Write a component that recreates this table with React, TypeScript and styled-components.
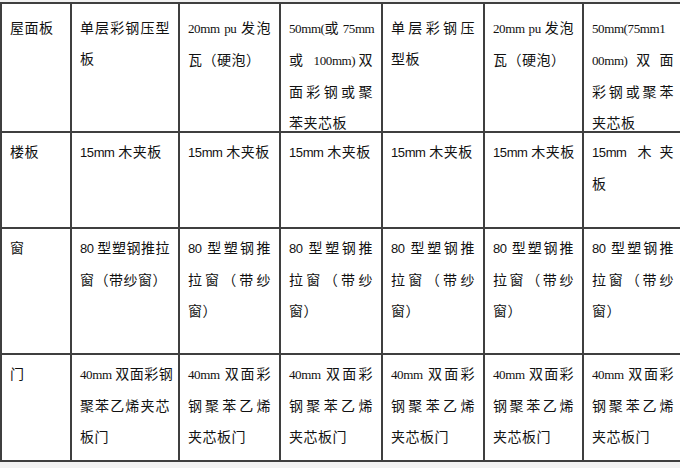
import { FunctionComponent } from "react";
import styled, { createGlobalStyle } from "styled-components";

const GlobalStyle = createGlobalStyle`
  html, body {
    margin: 0;
    padding: 0;
    background: #f2f2f2;
  }
  body {
    font-family: "Noto Sans CJK SC", sans-serif;
    color: #111;
  }
`;

const Page = styled.div`
  width: 680px;
  height: 468px;
  padding-top: 2px;
  box-sizing: border-box;
  overflow: hidden;
`;

const Frame = styled.div`
  height: 460px;
  width: 684px;
  display: grid;
  grid-template-columns: 70px 108px 101px 102px 102px 99px 100px;
  grid-template-rows: 129px 96px 126px 1fr;
  border-top: 2px solid #3f3f3f;
  border-left: 2px solid #3f3f3f;
  box-sizing: border-box;
  background: #fff;
  overflow: hidden;
`;

const Cell = styled.div<{ $top: boolean }>`
  border-right: 2px solid #3f3f3f;
  border-bottom: 2px solid #3f3f3f;
  padding: ${(p) => (p.$top ? "8px" : "3px")} 8px 0 8px;
  box-sizing: border-box;
  font-size: 14px;
  line-height: 31px;
  letter-spacing: 0.5px;
  min-width: 0;
`;

const Line = styled.div<{ $fill: boolean }>`
  width: max-content;
  min-width: 100%;
  text-align: ${(p) => (p.$fill ? "justify" : "left")};
  text-align-last: ${(p) => (p.$fill ? "justify" : "left")};
`;

const Latin = styled.span<{ $serif: boolean }>`
  font-family: ${(p) =>
    p.$serif ? '"Liberation Serif", serif' : '"Liberation Sans", sans-serif'};
  font-size: 13px;
  letter-spacing: -0.4px;
`;

type CellData = { lines: string[]; serif?: boolean };

const rows: CellData[][] = [
  [
    { lines: ["屋面板"] },
    { lines: ["单层彩钢压型", "板"] },
    { lines: ["20mm pu 发泡", "瓦（硬泡）"], serif: true },
    { lines: ["50mm(或 75mm", "或 100mm)双", "面彩钢或聚", "苯夹芯板"], serif: true },
    { lines: ["单层彩钢压", "型板"] },
    { lines: ["20mm pu 发泡", "瓦（硬泡）"], serif: true },
    { lines: ["50mm(75mm1", "00mm)双面", "彩钢或聚苯", "夹芯板"], serif: true },
  ],
  [
    { lines: ["楼板"] },
    { lines: ["15mm 木夹板"] },
    { lines: ["15mm 木夹板"] },
    { lines: ["15mm 木夹板"] },
    { lines: ["15mm 木夹板"] },
    { lines: ["15mm 木夹板"] },
    { lines: ["15mm 木夹", "板"] },
  ],
  [
    { lines: ["窗"] },
    { lines: ["80 型塑钢推拉", "窗（带纱窗）"] },
    { lines: ["80 型塑钢推", "拉窗（带纱", "窗）"] },
    { lines: ["80 型塑钢推", "拉窗（带纱", "窗）"] },
    { lines: ["80 型塑钢推", "拉窗（带纱", "窗）"] },
    { lines: ["80 型塑钢推", "拉窗（带纱", "窗）"] },
    { lines: ["80 型塑钢推", "拉窗（带纱", "窗）"] },
  ],
  [
    { lines: ["门"] },
    { lines: ["40mm 双面彩钢", "聚苯乙烯夹芯", "板门"], serif: true },
    { lines: ["40mm 双面彩", "钢聚苯乙烯", "夹芯板门"], serif: true },
    { lines: ["40mm 双面彩", "钢聚苯乙烯", "夹芯板门"], serif: true },
    { lines: ["40mm 双面彩", "钢聚苯乙烯", "夹芯板门"], serif: true },
    { lines: ["40mm 双面彩", "钢聚苯乙烯", "夹芯板门"], serif: true },
    { lines: ["40mm 双面彩", "钢聚苯乙烯", "夹芯板门"], serif: true },
  ],
];

// split a line into latin and CJK runs so the latin parts get their own font
const renderText = (text: string, serif: boolean) =>
  text.split(/([A-Za-z0-9().]+)/).map((part, i) =>
    /^[A-Za-z0-9().]+$/.test(part) ? (
      <Latin key={i} $serif={serif}>
        {part}
      </Latin>
    ) : (
      part
    )
  );

const App: FunctionComponent = () => {
  return (
    <Page>
      <GlobalStyle />
      <Frame>
        {rows.map((row, r) =>
          row.map((cell, c) => (
            <Cell key={`${r}-${c}`} $top={r === 0}>
              {cell.lines.map((line, i) => (
                <Line key={i} $fill={i < cell.lines.length - 1}>
                  {renderText(line, !!cell.serif)}
                </Line>
              ))}
            </Cell>
          ))
        )}
      </Frame>
    </Page>
  );
};

export default App;
